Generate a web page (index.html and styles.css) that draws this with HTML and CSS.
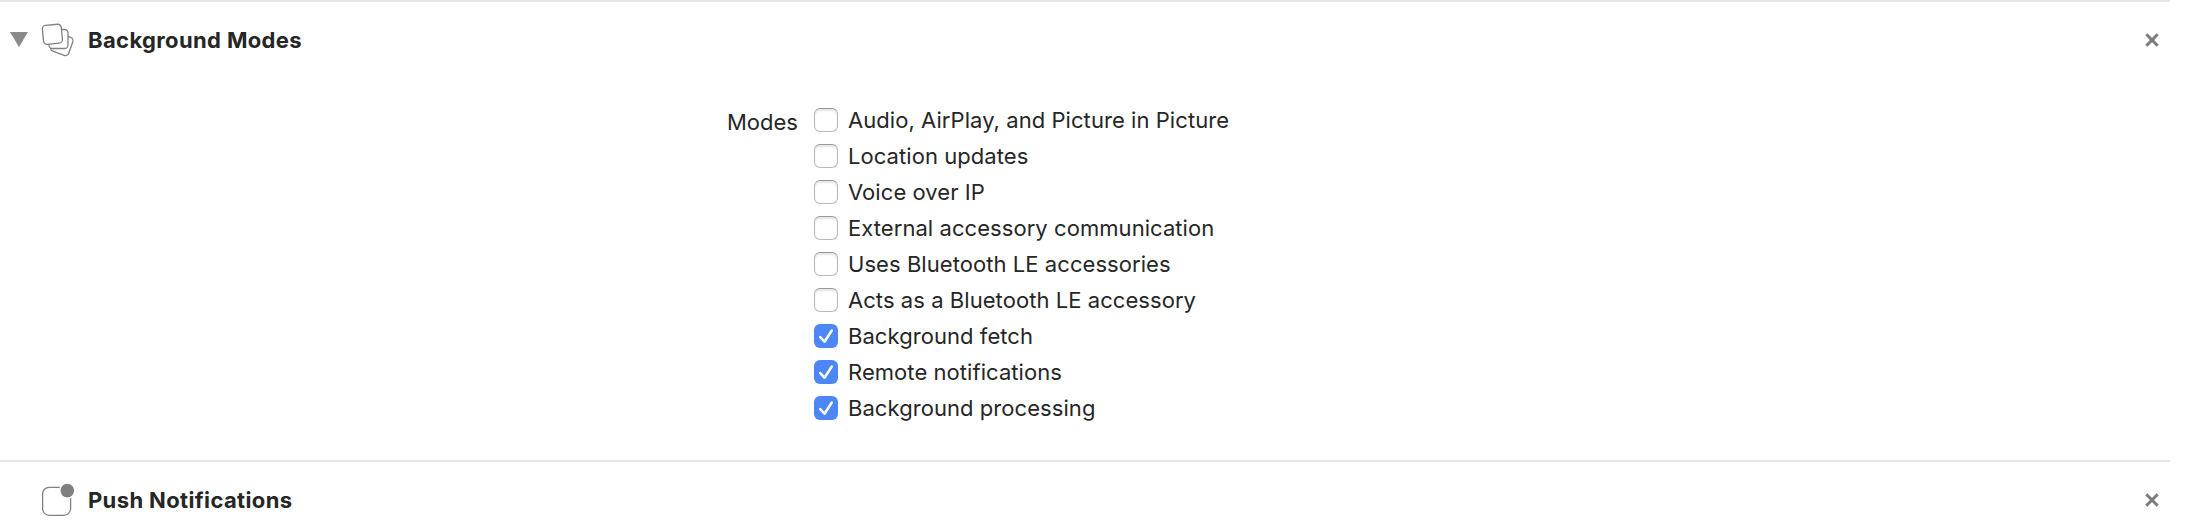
FILE: index.html
```html
<!DOCTYPE html>
<html lang="en">
<head>
<meta charset="utf-8">
<title>Capabilities</title>
<link rel="stylesheet" href="styles.css">
</head>
<body>
<main class="capabilities">
  <section class="capability capability-open">
    <header class="capability-header">
      <svg class="disclosure" viewBox="0 0 18 15"><path d="M0 0H18L9 15Z"/></svg>
      <svg class="icon" viewBox="0 0 34 34">
        <rect x="11.3" y="11.8" width="19" height="19" rx="3.5" transform="rotate(20 20.8 21.3)"/>
        <rect x="8" y="6.5" width="19" height="19" rx="3.5"/>
        <rect x="1.9" y="1.8" width="19" height="19" rx="3.5" transform="rotate(-5.5 11.4 11.3)"/>
      </svg>
      <h2 class="title">Background Modes</h2>
      <svg class="remove" viewBox="0 0 14 14"><path d="M1.3 1.3L12.700 12.700M12.700 1.300L1.300 12.700"/></svg>
    </header>
    <div class="settings">
      <span class="settings-label">Modes</span>
      <div class="options">
        <label class="option"><input class="box" type="checkbox"><span class="name">Audio, AirPlay, and Picture in Picture</span></label>
        <label class="option"><input class="box" type="checkbox"><span class="name">Location updates</span></label>
        <label class="option"><input class="box" type="checkbox"><span class="name">Voice over IP</span></label>
        <label class="option"><input class="box" type="checkbox"><span class="name">External accessory communication</span></label>
        <label class="option"><input class="box" type="checkbox"><span class="name">Uses Bluetooth LE accessories</span></label>
        <label class="option"><input class="box" type="checkbox"><span class="name">Acts as a Bluetooth LE accessory</span></label>
        <label class="option"><span class="box checked"><svg class="tick" viewBox="0 0 24 24"><path d="M6.200 13.200L10.500 17.700L17.800 6.500"/></svg></span><span class="name">Background fetch</span></label>
        <label class="option"><span class="box checked"><svg class="tick" viewBox="0 0 24 24"><path d="M6.200 13.200L10.500 17.700L17.800 6.500"/></svg></span><span class="name">Remote notifications</span></label>
        <label class="option"><span class="box checked"><svg class="tick" viewBox="0 0 24 24"><path d="M6.200 13.200L10.500 17.700L17.800 6.500"/></svg></span><span class="name">Background processing</span></label>
      </div>
    </div>
  </section>
  <section class="capability">
    <header class="capability-header">
      <span class="disclosure"></span>
      <svg class="icon" viewBox="0 0 34 34">
        <rect x="1.6" y="4.3" width="28" height="28" rx="6.5"/>
        <circle class="badge" cx="26.3" cy="7.6" r="7.6"/>
      </svg>
      <h2 class="title">Push Notifications</h2>
      <svg class="remove" viewBox="0 0 14 14"><path d="M1.300 1.300L12.700 12.700M12.700 1.300L1.300 12.700"/></svg>
    </header>
  </section>
</main>
</body>
</html>
```

FILE: styles.css
```css
* { box-sizing: border-box; }
body {
  margin: 0;
  background: #fff;
  color: #262626;
  font-family: Inter, "Liberation Sans", sans-serif;
  font-size: 22px;
}
.capabilities { width: 2170px; }
.capability { border-top: 2px solid #e5e5e5; }
.capability-open { height: 460px; }
.capability-header {
  display: flex;
  align-items: center;
  height: 76px;
  padding: 0 11px 0 10px;
}
.disclosure {
  width: 18px;
  height: 15px;
  margin-bottom: 1px;
  fill: #8a8a8a;
}
.icon {
  overflow: visible;
  width: 34px;
  height: 34px;
  margin-left: 13px;
  fill: #fff;
  stroke: #808080;
  stroke-width: 1.3;
}
.badge { fill: #808080; stroke: #fff; stroke-width: 1.6; }
.title {
  margin: 0 auto 0 13px;
  font-size: 22px;
  font-weight: 700;
  line-height: 26px;
  letter-spacing: 0.37px;
}
.remove {
  width: 14px;
  height: 14px;
  fill: none;
  stroke: #7b7b7b;
  stroke-width: 3;
}
.settings { display: flex; padding: 24px 0 0 727px; }
.settings-label { width: 87px; line-height: 40px; }
.options { display: flex; flex-direction: column; }
.option { display: flex; align-items: center; height: 36px; }
.box {
  appearance: none;
  width: 24px;
  height: 24px;
  margin: 0;
  border: 1px solid #b8b8b8;
  border-top-color: #999;
  border-radius: 6px;
  background: #fff;
  box-shadow: inset 0 2px 2px #e6e6e6;
}
.checked { border: 0; background: #4c87f5; box-shadow: none; }
.tick {
  display: block;
  fill: none;
  stroke: #fff;
  stroke-width: 2.5;
  stroke-linecap: round;
  stroke-linejoin: round;
}
.name {
  margin-left: 10px;
  line-height: 36px;
  letter-spacing: 0.06px;
}
```
